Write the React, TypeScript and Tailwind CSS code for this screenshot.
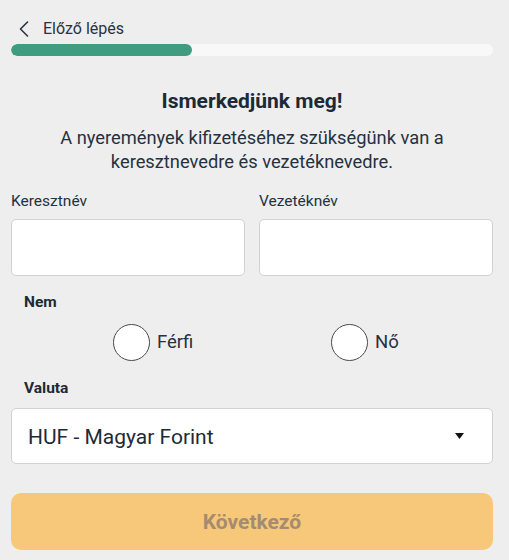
import React from "react";

export default function App() {
  return (
    <div
      className="w-full min-h-[560px] bg-[#eeeeee] pl-[11px] pr-[16px] text-[#1f2a37]"
      style={{ fontFamily: "Roboto, 'Noto Sans', sans-serif" }}
    >
      <div className="pt-[19px] flex items-center h-[39px]">
        <svg className="ml-[8px]" width="10" height="16" viewBox="0 0 10 16" fill="none">
          <path d="M8.5 1 L1.5 8 L8.5 15" stroke="#2a3340" strokeWidth="1.6" strokeLinecap="round" strokeLinejoin="round" />
        </svg>
        <span className="ml-[14px] text-[16px] leading-[20px] text-[#2a3340]">Előző lépés</span>
      </div>
      <div className="mt-[5px] h-[12px] w-full rounded-full bg-[#f8f8f8] overflow-hidden">
        <div className="h-full w-[181px] rounded-full bg-[#3f9c7e]" />
      </div>
      <h1 className="mt-[33px] text-center text-[21px] leading-[24px] font-bold text-[#1c2a38]">
        Ismerkedjünk meg!
      </h1>
      <p className="mt-[13px] text-center text-[18.3px] leading-[24px] text-[#253241]">
        A nyeremények kifizetéséhez szükségünk van a<br />keresztnevedre és vezetéknevedre.
      </p>
      <div className="mt-[17px] grid grid-cols-2 gap-[14px]">
        <div className="flex flex-col">
          <label className="text-[15.5px] leading-[20px] text-[#253241]">Keresztnév</label>
          <div className="mt-[8px] h-[57px] rounded-[5px] border border-[#d2d2d2] bg-white" />
        </div>
        <div className="flex flex-col">
          <label className="text-[15.5px] leading-[20px] text-[#253241]">Vezetéknév</label>
          <div className="mt-[8px] h-[57px] rounded-[5px] border border-[#d2d2d2] bg-white" />
        </div>
      </div>
      <div className="mt-[16px] pl-[13px] text-[15.5px] leading-[20px] font-bold text-[#1c2a38]">Nem</div>
      <div className="mt-[12px] flex items-center pl-[102px] h-[37px]">
        <div className="flex items-center w-[218px]">
          <div className="w-[37px] h-[37px] rounded-full border-[1.5px] border-[#4a4a4a] bg-white" />
          <span className="ml-[7px] text-[18.5px] text-[#253241]">Férfi</span>
        </div>
        <div className="flex items-center">
          <div className="w-[37px] h-[37px] rounded-full border-[1.5px] border-[#4a4a4a] bg-white" />
          <span className="ml-[7px] text-[18.5px] text-[#253241]">Nő</span>
        </div>
      </div>
      <div className="mt-[17px] pl-[13px] text-[15.5px] leading-[20px] font-bold text-[#1c2a38]">Valuta</div>
      <div className="mt-[10px] h-[56px] rounded-[5px] border border-[#d2d2d2] bg-white flex items-center pl-[16px] pr-[28px]">
        <span className="flex-1 pt-[3px] text-[21px] text-[#1f2a36]">HUF - Magyar Forint</span>
        <svg width="9" height="6" viewBox="0 0 9 6">
          <path d="M0 0 L9 0 L4.5 6 Z" fill="#111" />
        </svg>
      </div>
      <button className="mt-[29px] w-full h-[57px] pt-[2px] rounded-[10px] bg-[#f7c879] text-[21px] font-bold text-[#a58b70]">
        Következő
      </button>
    </div>
  );
}
